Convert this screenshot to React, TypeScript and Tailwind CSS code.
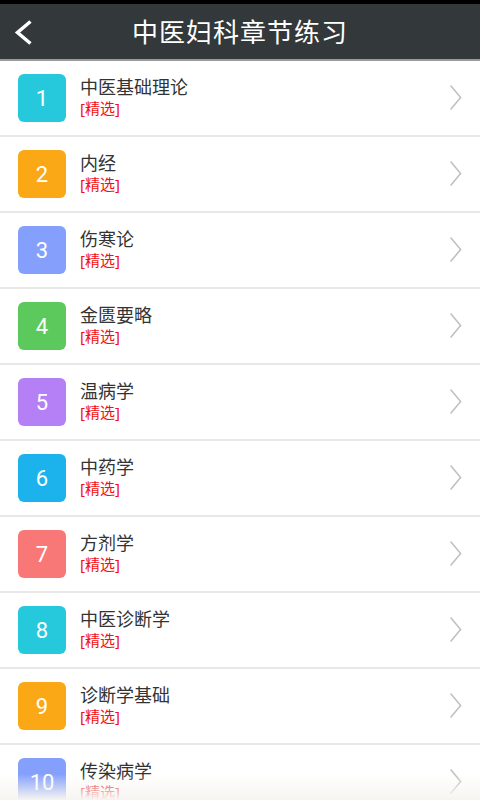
const chapters = [
  { name: "中医基础理论", color: "bg-[#26c8dc]" },
  { name: "内经", color: "bg-[#fba817]" },
  { name: "伤寒论", color: "bg-[#84a0fc]" },
  { name: "金匮要略", color: "bg-[#5cc95c]" },
  { name: "温病学", color: "bg-[#b57ff6]" },
  { name: "中药学", color: "bg-[#1cb3ec]" },
  { name: "方剂学", color: "bg-[#f87878]" },
  { name: "中医诊断学", color: "bg-[#26c8dc]" },
  { name: "诊断学基础", color: "bg-[#fba817]" },
  { name: "传染病学", color: "bg-[#84a0fc]" },
];

function Arrow({ className, width, height, stroke }: { className: string; width: number; height: number; stroke: number }) {
  return (
    <svg width={width + stroke * 2} height={height + stroke * 2} className={className} fill="none">
      <polyline
        points={`${stroke},${stroke} ${width + stroke},${height / 2 + stroke} ${stroke},${height + stroke}`}
        stroke="currentColor"
        strokeWidth={stroke}
      />
    </svg>
  );
}

export default function App() {
  return (
    <div
      className="relative w-[480px] h-[800px] overflow-hidden bg-white"
      style={{ fontFamily: '"Noto Sans", "Noto Sans CJK SC", sans-serif' }}
    >
      <div className="h-[4px] bg-black" />
      <div className="relative h-[57px] bg-[#33383b] border-b-2 border-[#9a9c9c] flex items-center justify-center">
        <Arrow className="absolute left-[14px] top-[14px] text-white rotate-180" width={13} height={22} stroke={3.5} />
        <h1 className="text-white text-[26px] tracking-[1px] mt-[1px]">中医妇科章节练习</h1>
      </div>

      <ul>
        {chapters.map((c, i) => (
          <li key={i} className="h-[76px] border-b-2 border-[#e8e8e8] flex items-center pl-[18px] pr-[18px]">
            <div
              className={`w-[48px] h-[48px] rounded-[6px] ${c.color} flex items-center justify-center text-white text-[22px]`}
              style={{ fontFamily: "Roboto, sans-serif" }}
            >
              {i + 1}
            </div>
            <div className="ml-[14px] flex-1 flex flex-col">
              <span className="text-[18px] leading-[19px] text-[#333] mt-[-2px]">{c.name}</span>
              <span className="text-[15px] leading-[17px] text-[#f01010] mt-[3px]">[精选]</span>
            </div>
            <Arrow className="text-[#c0c0c0]" width={10} height={24} stroke={1.6} />
          </li>
        ))}
      </ul>

      <div className="absolute bottom-0 left-0 right-0 h-[26px] bg-gradient-to-b from-transparent to-[#f7f5f1]" />
    </div>
  );
}
